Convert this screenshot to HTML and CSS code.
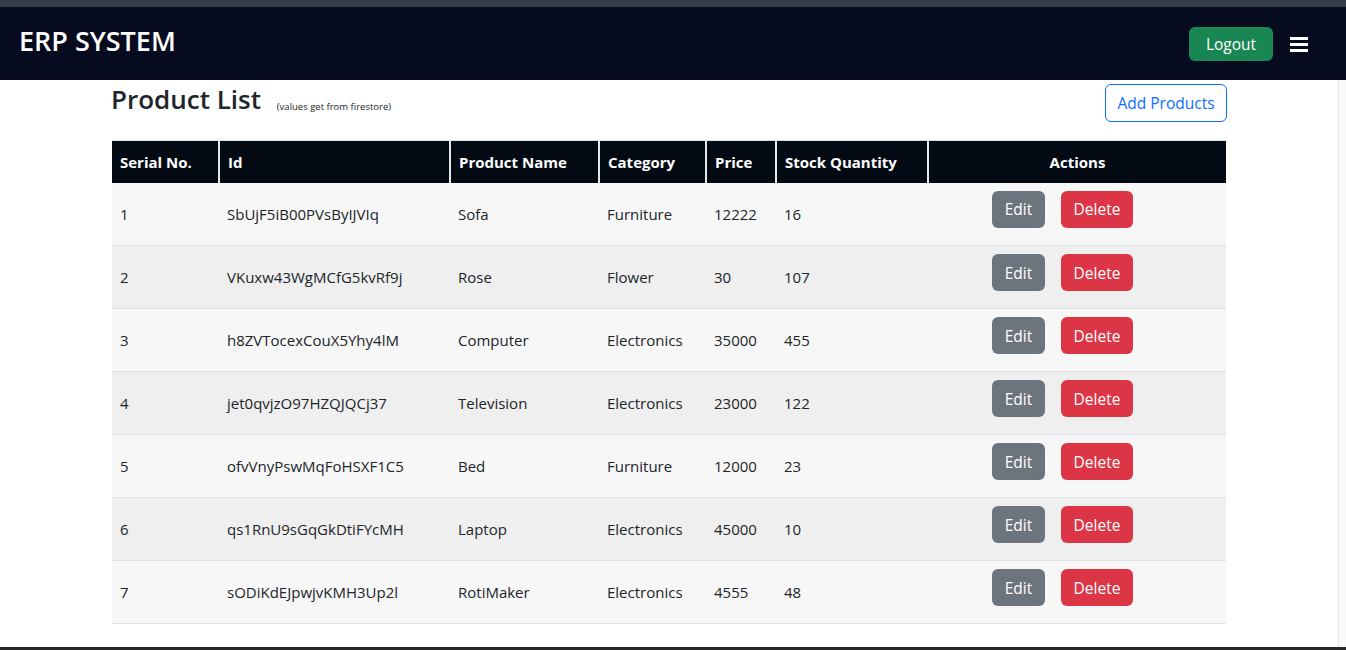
FILE: index.html
```html
<!DOCTYPE html>
<html lang="en">
<head>
<meta charset="utf-8">
<title>ERP System - Product List</title>
<link rel="stylesheet" href="styles.css">
</head>
<body>
<div class="topstrip"></div>
<nav class="navbar">
  <span class="brand">ERP SYSTEM</span>
  <div class="nav-right">
    <button class="btn btn-success">Logout</button>
    <button class="menu-toggle" aria-label="menu">
      <svg width="18" height="16" viewBox="0 0 18 16"><rect x="0" y="1" width="18" height="3" fill="#fff"/><rect x="0" y="7" width="18" height="3" fill="#fff"/><rect x="0" y="13" width="18" height="3" fill="#fff"/></svg>
    </button>
  </div>
</nav>
<div class="main">
  <div class="page">
    <div class="container">
      <div class="list-head">
        <h2 class="title">Product List <small class="note">(values get from firestore)</small></h2>
        <button class="btn btn-outline-primary">Add Products</button>
      </div>
      <table class="products">
        <colgroup>
          <col class="c-serial"><col class="c-id"><col class="c-name"><col class="c-cat"><col class="c-price"><col class="c-stock"><col class="c-actions">
        </colgroup>
        <thead>
          <tr><th>Serial No.</th><th>Id</th><th>Product Name</th><th>Category</th><th>Price</th><th>Stock Quantity</th><th class="center">Actions</th></tr>
        </thead>
        <tbody>
          <tr><td>1</td><td>SbUjF5iB00PVsByIJVIq</td><td>Sofa</td><td>Furniture</td><td>12222</td><td>16</td><td class="actions"><div class="act"><button class="btn btn-secondary">Edit</button><button class="btn btn-danger">Delete</button></div></td></tr>
          <tr><td>2</td><td>VKuxw43WgMCfG5kvRf9j</td><td>Rose</td><td>Flower</td><td>30</td><td>107</td><td class="actions"><div class="act"><button class="btn btn-secondary">Edit</button><button class="btn btn-danger">Delete</button></div></td></tr>
          <tr><td>3</td><td>h8ZVTocexCouX5Yhy4lM</td><td>Computer</td><td>Electronics</td><td>35000</td><td>455</td><td class="actions"><div class="act"><button class="btn btn-secondary">Edit</button><button class="btn btn-danger">Delete</button></div></td></tr>
          <tr><td>4</td><td>jet0qvjzO97HZQJQCj37</td><td>Television</td><td>Electronics</td><td>23000</td><td>122</td><td class="actions"><div class="act"><button class="btn btn-secondary">Edit</button><button class="btn btn-danger">Delete</button></div></td></tr>
          <tr><td>5</td><td>ofvVnyPswMqFoHSXF1C5</td><td>Bed</td><td>Furniture</td><td>12000</td><td>23</td><td class="actions"><div class="act"><button class="btn btn-secondary">Edit</button><button class="btn btn-danger">Delete</button></div></td></tr>
          <tr><td>6</td><td>qs1RnU9sGqGkDtiFYcMH</td><td>Laptop</td><td>Electronics</td><td>45000</td><td>10</td><td class="actions"><div class="act"><button class="btn btn-secondary">Edit</button><button class="btn btn-danger">Delete</button></div></td></tr>
          <tr><td>7</td><td>sODiKdEJpwjvKMH3Up2l</td><td>RotiMaker</td><td>Electronics</td><td>4555</td><td>48</td><td class="actions"><div class="act"><button class="btn btn-secondary">Edit</button><button class="btn btn-danger">Delete</button></div></td></tr>
        </tbody>
      </table>
    </div>
  </div>
  <div class="edge"></div>
</div>
<div class="bottomstrip"></div>
</body>
</html>
```
FILE: styles.css
```css
* { box-sizing: border-box; }
html, body { margin: 0; padding: 0; }
body {
  font-family: "Open Sans", "Noto Sans", sans-serif;
  font-size: 15px;
  color: #212529;
  background: #fff;
  display: flex;
  flex-direction: column;
  height: 100vh;
  overflow: hidden;
}
.topstrip { height: 7px; background: #353e48; flex: none; }
.navbar {
  height: 73px;
  flex: none;
  background: #070b20;
  display: flex;
  align-items: center;
  justify-content: space-between;
  padding: 0 38px 0 19px;
}
.brand {
  color: #fff;
  font-size: 27px;
  font-weight: 600;
  margin-top: -7px;
}
.nav-right { display: flex; align-items: center; gap: 17px; }
.btn {
  font-family: inherit;
  font-size: 15.5px;
  border: 1px solid transparent;
  border-radius: 6px;
  padding: 2px 0 0 0;
  line-height: 1;
  white-space: nowrap;
  cursor: pointer;
  display: inline-flex;
  align-items: center;
  justify-content: center;
}
.btn-success { background: #198754; color: #fff; height: 34px; width: 84px; }
.menu-toggle {
  background: none; border: 0; padding: 0; width: 18px; height: 16px;
  display: flex; cursor: pointer;
}
.main { flex: 1; display: flex; min-height: 0; }
.page { flex: 1; }
.edge { width: 8px; border-left: 1px solid #e4e4e4; background: #fafafa; }
.bottomstrip { height: 3px; flex: none; background: #2a2724; }
.container { width: 1116px; margin: 0 auto; }
.list-head {
  display: flex;
  justify-content: space-between;
  align-items: flex-start;
  padding: 4px 0 0 0;
  height: 60px;
}
.title {
  margin: 0;
  font-size: 26px;
  font-weight: 600;
  line-height: 1.2;
  color: #212529;
}
.note { font-size: 9.5px; font-weight: 500; margin-left: 9px; vertical-align: -1px; }
.btn-outline-primary {
  background: #fff; color: #0d6efd; border-color: #0d6efd;
  height: 38px; width: 122px;
}
.products {
  width: 1114px;
  margin-left: 1px;
  table-layout: fixed;
  border-collapse: collapse;
  border-top: 1px solid #dee2e6;
}
.c-serial { width: 107px; }
.c-id { width: 231px; }
.c-name { width: 149px; }
.c-cat { width: 107px; }
.c-price { width: 70px; }
.c-stock { width: 152px; }
.c-actions { width: 298px; }
.products th {
  background: #030a13;
  color: #fff;
  font-weight: 700;
  text-align: left;
  height: 42px;
  padding: 0 8px;
  border-left: 2px solid #e5e8eb;
}
.products th:first-child { border-left: 0; }
.products th.center { text-align: center; }
.products td {
  height: 63px;
  padding: 0 8px;
  border-bottom: 1px solid #dee2e6;
  vertical-align: middle;
  background: #f7f7f7;
}
.products tbody tr:nth-child(even) td { background: #efefef; }
.products td.actions { vertical-align: top; padding: 8px 29px 0 0; }
.act { display: flex; justify-content: center; gap: 16px; }
.btn-secondary { background: #6c757d; color: #fff; height: 37px; width: 53px; }
.btn-danger { background: #dc3545; color: #fff; height: 37px; width: 72px; }
```
